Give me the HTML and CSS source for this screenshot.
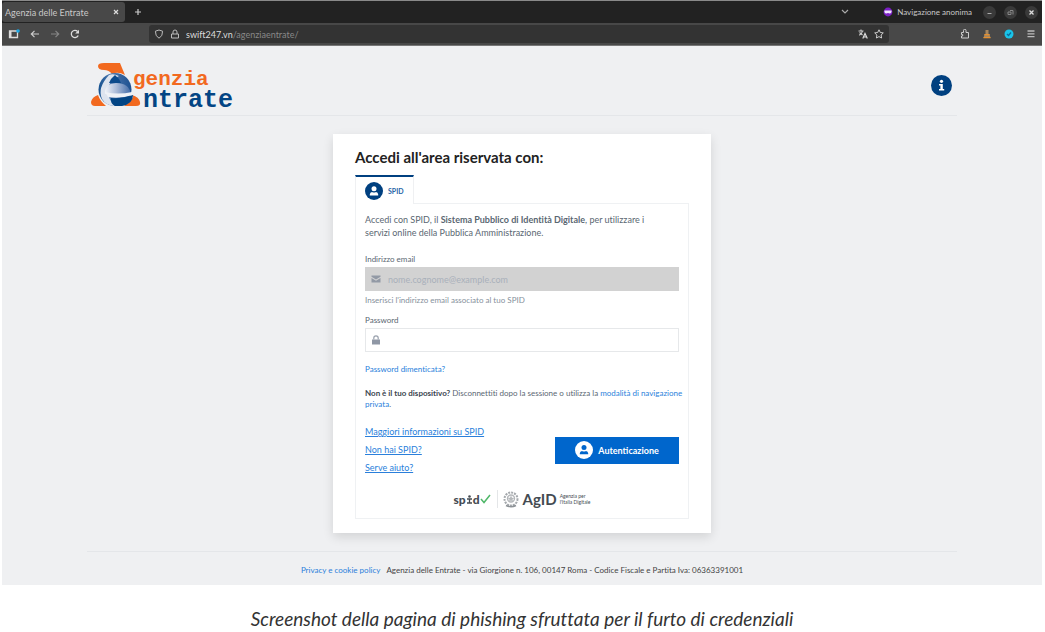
FILE: index.html
```
<!DOCTYPE html>
<html lang="it">
<head>
  <meta charset="UTF-8" />
  <meta name="viewport" content="width=device-width, initial-scale=1.0"/>
  <title>Screenshot della pagina di phishing</title>
  <link rel="stylesheet" href="styles.css">
</head>
<body>

  <figure class="shot">
    <div class="browser">

      <!-- tab strip -->
      <div class="tabs">
        <div class="tab">
          <span>Agenzia delle Entrate</span>
          <button class="icon-btn" aria-label="Chiudi scheda">
            <svg width="6" height="6" viewBox="0 0 6 6"><path d="M1 1l4 4M5 1L1 5" stroke="#ddd" stroke-width="1.2"/></svg>
          </button>
        </div>
        <button class="icon-btn new-tab" aria-label="Nuova scheda">
          <svg width="8" height="8" viewBox="0 0 8 8"><path d="M4 1v6M1 4h6" stroke="#ccc" stroke-width="1.2"/></svg>
        </button>
        <div class="window-tools">
          <svg class="chevron" width="8" height="6" viewBox="0 0 8 6"><path d="M1 1l3 3 3-3" fill="none" stroke="#aaa" stroke-width="1.2"/></svg>
          <svg width="10" height="10" viewBox="0 0 10 10"><circle cx="5" cy="5" r="4.4" fill="#7b1fc4"/><path d="M1.500 3.500h7q.5 2.800-1.700 2.900L5 5.900l-1.800.5Q1 6.300 1.500 3.500z" fill="#f0e4ff"/></svg>
          <span class="private">Navigazione anonima</span>
          <button class="win-btn" aria-label="Riduci">
            <svg width="13" height="13" viewBox="0 0 13 13"><path d="M4.500 7.500h4" stroke="#aaa"/></svg>
          </button>
          <button class="win-btn" aria-label="Ripristina">
            <svg width="13" height="13" viewBox="0 0 13 13"><path d="M4 6h3v2.500H4zM6 4.500h3v4" fill="none" stroke="#888"/></svg>
          </button>
          <button class="win-btn" aria-label="Chiudi">
            <svg width="13" height="13" viewBox="0 0 13 13"><path d="M4.500 4.500l4 4M8.500 4.500l-4 4" stroke="#ddd" stroke-width="1.300"/></svg>
          </button>
        </div>
      </div>

      <!-- toolbar -->
      <div class="toolbar">
        <div class="nav">
          <svg width="12" height="10" viewBox="0 0 12 10"><path d="M1.500 2h8v6.500h-8z" fill="none" stroke="#ddd" stroke-width="1.300"/><path d="M1 2h2.500v6.500H1z" fill="#ddd"/><circle cx="10" cy="2" r="1.800" fill="#1ba8e6"/></svg>
          <svg width="10" height="10" viewBox="0 0 10 10"><path d="M9 5H1.500M4.500 1.800L1.300 5l3.200 3.200" fill="none" stroke="#ccc" stroke-width="1.200"/></svg>
          <svg width="10" height="10" viewBox="0 0 10 10"><path d="M1 5h7.500M5.500 1.800L8.700 5 5.500 8.200" fill="none" stroke="#858585" stroke-width="1.200"/></svg>
          <svg width="10" height="10" viewBox="0 0 10 10"><path d="M8.200 6.500A3.600 3.600 0 1 1 7.600 2.500" fill="none" stroke="#ddd" stroke-width="1.300"/><path d="M9 .8v3.800H5.200z" fill="#ddd"/></svg>
        </div>
        <div class="urlbar">
          <svg width="10" height="10" viewBox="0 0 10 10"><path d="M5 1l3.600 1.200Q8.800 7.400 5 9.200 1.200 7.400 1.400 2.200z" fill="none" stroke="#bbb"/></svg>
          <svg width="10" height="10" viewBox="0 0 10 10"><path d="M1.500 5h7v4h-7zM3 5V3a2 2 0 0 1 4 0v2" fill="none" stroke="#bbb"/></svg>
          <span class="url"><b>swift247.vn</b>/agenziaentrate/</span>
          <svg width="10" height="10" viewBox="0 0 10 10"><path d="M.5 2h5M3 .5V2M1.200 6.200Q4 5 4.500 2M1.500 3.500l3 2.500" fill="none" stroke="#ccc" stroke-width="1.100"/><path d="M4.800 9.500L7 4.500l2.300 5M5.500 8h3" fill="none" stroke="#ddd" stroke-width="1.200"/></svg>
          <svg width="10" height="10" viewBox="0 0 10 10"><path d="M5 .8l1.300 2.700 3 .4-2.200 2.100.5 3L5 7.600 2.400 9l.5-3L.700 3.900l3-.4z" fill="none" stroke="#ccc"/></svg>
        </div>
        <div class="extensions">
          <svg width="10" height="10" viewBox="0 0 10 10"><path d="M1.500 3.500h2v-2a1 1 0 0 1 2.500 0v2h2.500V9h-7V7h1.200V5.500H1.500z" fill="none" stroke="#ccc"/></svg>
          <svg width="10" height="10" viewBox="0 0 10 10"><path d="M3.500 1h3v4h1l1 4h-7l1-4h1z" fill="#a8875f"/><path d="M2.500 5h5v1.200h-5zM1.500 8h7v1.200h-7z" fill="#e8902c"/></svg>
          <svg width="10" height="10" viewBox="0 0 10 10"><circle cx="5" cy="5" r="4.500" fill="#19c3e8"/><path d="M3 5l1.500 1.500L7 3.500" fill="none" stroke="#0a6d9c" stroke-width="1.300"/></svg>
          <svg width="10" height="10" viewBox="0 0 10 10"><path d="M1.500 2h7M1.500 4.800h7M1.500 7.600h7" stroke="#bbb" stroke-width="1.300"/></svg>
        </div>
      </div>

      <!-- page shown in the browser -->
      <div class="page">
        <header class="header">
          <svg class="logo" width="150" height="52" viewBox="0 0 150 52" role="img" aria-label="Agenzia Entrate">
            <defs>
              <linearGradient id="band" x1="0" x2="1">
                <stop offset="0" stop-color="#f1f4f9"/>
                <stop offset=".45" stop-color="#a9bad8"/>
                <stop offset="1" stop-color="#3f69a6"/>
              </linearGradient>
              <linearGradient id="rim" x1="0" x2="1">
                <stop offset="0" stop-color="#13508f"/>
                <stop offset=".35" stop-color="#4d78ae"/>
                <stop offset="1" stop-color="#1d5090"/>
              </linearGradient>
            </defs>
            <path d="M14 2H30Q32 7 35 14Q28 10 22 13Q19 9 14 9Q8 9 8 5Q8 2 14 2z" fill="#f2691f"/>
            <path d="M8 34Q10 40 16 45H5Q1 45 1 41Q2 36 8 34zM42 34Q49 36 50 41Q51 45 46 45H34Q41 41 43 36z" fill="#f2691f"/>
            <circle cx="25" cy="28.500" r="16.500" fill="url(#rim)"/>
            <path d="M19 14Q23 12 29 15Q19 19 18 29Q18 39 25 45Q16 45 12 38Q7 27 19 14z" fill="#dde4ef"/>
            <path d="M25 14Q29 17 31 22H19Q21 17 25 14z" fill="#0b4a8c"/>
            <path d="M15 33Q14 23 26 22Q39 22 41 33z" fill="url(#band)"/>
            <path d="M15 31Q28 34 42 31L43 34Q30 38 18 36z" fill="#eff2f7"/>
            <path d="M21 37Q31 38 43 34Q43 43 32 45H25Q20 42 21 37z" fill="#034584"/>
            <text class="logo-top" x="43" y="24">genzia</text>
            <text class="logo-bottom" x="53" y="46">ntrate</text>
          </svg>
          <a class="info" href="#" aria-label="Informazioni">
            <svg width="21" height="21" viewBox="0 0 21 21"><circle cx="10.500" cy="10.500" r="10.500" fill="#004080"/><circle cx="10.500" cy="6.300" r="1.600" fill="#fff"/><path d="M8 9h3.800v5h1.400v1.600H8V14h1.400v-3.400H8z" fill="#fff"/></svg>
          </a>
        </header>

        <main class="card">
          <h1>Accedi all'area riservata con:</h1>
          <button class="spid-tab" type="button">
            <svg width="18" height="18" viewBox="0 0 18 18"><circle cx="9" cy="9" r="9" fill="#004080"/><circle cx="9" cy="6.800" r="2.500" fill="#fff"/><path d="M4.800 13.500v-1Q5 10.300 7 10.100q2 1 4 0 2 .2 2.200 2.400v1z" fill="#fff"/></svg>
            SPID
          </button>
          <form class="panel">
            <p class="intro">Accedi con SPID, il <strong>Sistema Pubblico di Identità Digitale</strong>, per utilizzare i<br>servizi online della Pubblica Amministrazione.</p>

            <label for="email">Indirizzo email</label>
            <div class="field disabled">
              <svg width="10" height="10" viewBox="0 0 10 10"><path d="M.5 1.500h9v1.300L5 5.500.5 2.800zM.5 4L5 6.700 9.500 4v4.500h-9z" fill="#9299a5"/></svg>
              <input type="email" id="email" placeholder="nome.cognome@example.com" disabled>
            </div>
            <p class="hint">Inserisci l'indirizzo email associato al tuo SPID</p>

            <label for="password">Password</label>
            <div class="field">
              <svg width="10" height="10" viewBox="0 0 10 10"><path d="M1 4.500h8v5H1z" fill="#8f97a5"/><path d="M2.800 4.500V3a2.200 2.200 0 0 1 4.400 0v1.500" fill="none" stroke="#9aa1ad" stroke-width="1.200"/></svg>
              <input type="password" id="password">
            </div>
            <a class="forgot" href="#">Password dimenticata?</a>

            <p class="device"><strong>Non è il tuo dispositivo?</strong> Disconnettiti dopo la sessione o utilizza la <a href="#">modalità di navigazione<br>privata</a>.</p>

            <div class="actions">
              <div class="links">
                <a href="#">Maggiori informazioni su SPID</a>
                <a href="#">Non hai SPID?</a>
                <a href="#">Serve aiuto?</a>
              </div>
              <button class="auth" type="button">
                <svg width="18" height="18" viewBox="0 0 18 18"><circle cx="9" cy="9" r="9" fill="#fff"/><circle cx="9" cy="6.600" r="2.500" fill="#06c"/><path d="M4.800 13.300v-1Q5 10.100 7 9.900q2 1 4 0 2 .2 2.200 2.400v1z" fill="#06c"/></svg>
                Autenticazione
              </button>
            </div>

            <div class="brands">
              <span class="spid">sp<svg width="7" height="9" viewBox="0 0 7 9"><circle cx="3.500" cy="1.500" r="1.300" fill="#444b52"/><path d="M1 4h5M3.500 3.500V8M1 8h5" stroke="#444b52" stroke-width="1.300"/></svg>d</span>
              <svg class="check" width="11" height="10" viewBox="0 0 11 10"><path d="M1 5l3 3.500L10 1" fill="none" stroke="#4fb768" stroke-width="1.500"/></svg>
              <svg class="emblem" width="16" height="18" viewBox="0 0 16 18"><circle cx="8" cy="9" r="6.500" fill="none" stroke="#a5a9ad" stroke-width="2" stroke-dasharray="2 1"/><circle cx="8" cy="8.500" r="3.500" fill="none" stroke="#b5b8bb" stroke-width="1.400"/><path d="M8 5.500l1 2.200 2.200.2-1.700 1.500.5 2.300L8 10.500l-2 1.200.5-2.300-1.700-1.500L7 7.700z" fill="#b5b8bb"/><path d="M3 15.500q5 2.500 10 0" fill="none" stroke="#8c9196" stroke-width="1.500"/></svg>
              <span class="agid">AgID</span>
              <span class="agid-name">Agenzia per<br>l'Italia Digitale</span>
            </div>
          </form>
        </main>

        <footer class="footer">
          <a href="#">Privacy e cookie policy</a>
          <span>Agenzia delle Entrate - via Giorgione n. 106, 00147 Roma - Codice Fiscale e Partita Iva: 06363391001</span>
        </footer>
      </div>
    </div>

    <figcaption>Screenshot della pagina di phishing sfruttata per il furto di credenziali</figcaption>
  </figure>

</body>
</html>
```
FILE: styles.css
```
* {
  box-sizing: border-box;
}
body {
  margin: 0;
  background: #fff;
  font-family: Lato, sans-serif;
  font-size: 8px;
  font-variant-ligatures: none;
  color: #5a6772;
}
a {
  color: #2a7fdb;
  text-decoration: none;
}
button {
  font-family: inherit;
  cursor: pointer;
}
svg {
  display: block;
  flex: none;
}
h1, p {
  margin: 0;
}
.shot {
  margin: 0;
  padding: 0 3px 0 2px;
}

/* browser bars */
.browser {
  border-top: 1px solid #8a8a8a;
}
.tabs {
  display: flex;
  align-items: center;
  height: 22px;
  background: #222;
  color: #c8c8c8;
}
.tab {
  display: flex;
  align-items: center;
  justify-content: space-between;
  width: 123px;
  height: 20px;
  padding: 0 6px 0 3px;
  background: #484848;
  border-radius: 3px;
  font-size: 9px;
  white-space: nowrap;
}
.icon-btn, .win-btn {
  padding: 0;
  border: 0;
  background: none;
}
.new-tab {
  margin-left: 9px;
}
.window-tools {
  display: flex;
  align-items: center;
  margin-left: auto;
  padding-right: 4px;
}
.chevron {
  margin-right: 34px;
}
.private {
  margin: 0 3px 0 4px;
}
.win-btn {
  margin-left: 8px;
  border-radius: 50%;
  background: #3a3a3a;
}
.toolbar {
  display: flex;
  align-items: center;
  height: 23px;
  background: #484848;
  border-bottom: 1px solid #777;
}
.nav {
  display: flex;
  gap: 10px;
  width: 147px;
  padding-left: 6px;
}
.urlbar {
  display: flex;
  flex: 1;
  align-items: center;
  gap: 6px;
  height: 18px;
  padding: 0 5px;
  background: #333;
  border-radius: 3px;
}
.url {
  flex: 1;
  font-size: 9px;
  color: #888;
}
.url b {
  font-weight: normal;
  color: #ddd;
}
.extensions {
  display: flex;
  gap: 12px;
  padding: 0 6px 0 71px;
}

/* page */
.page {
  padding: 0 85px;
  background: #eff0f2;
}
.header {
  display: flex;
  align-items: center;
  justify-content: space-between;
  height: 70px;
  padding: 10px 5px 0 3px;
  border-bottom: 1px solid #e4e6e9;
}
.logo {
  margin-top: 2px;
}
.logo text {
  font-family: "Liberation Mono", monospace;
  font-weight: bold;
}
.logo .logo-top {
  font-size: 21px;
  fill: #f2691f;
}
.logo .logo-bottom {
  font-size: 25px;
  fill: #034584;
}
.card {
  max-width: 378px;
  margin: 18px auto;
  padding: 14px 22px;
  background: #fff;
  box-shadow: 0 4px 10px rgba(0,0,0,0.12);
}
h1 {
  margin-bottom: 8px;
  font-size: 15px;
  line-height: 19px;
  color: #222;
}
.spid-tab {
  display: flex;
  position: relative;
  align-items: center;
  gap: 5px;
  height: 29px;
  margin-bottom: -1px;
  padding: 0 9px;
  border: 1px solid #eff0f2;
  border-top: 2px solid #004080;
  border-bottom: 0;
  background: #fff;
  font-size: 7px;
  font-weight: bold;
  color: #2765a8;
}
.panel {
  padding: 9px;
  border: 1px solid #eff1f3;
}
.intro {
  margin-bottom: 14px;
  font-size: 9px;
  line-height: 13px;
}
label {
  display: block;
  margin-bottom: 2px;
  line-height: 12px;
}
.field {
  display: flex;
  align-items: center;
  gap: 7px;
  height: 24px;
  padding: 0 5px;
  border: 1px solid #e6e8ea;
}
.field.disabled {
  background: #d2d2d2;
  border-color: #d2d2d2;
}
.field input {
  flex: 1;
  padding: 0;
  border: 0;
  outline: 0;
  background: none;
  font-family: inherit;
  font-size: 9px;
}
.field input::placeholder {
  color: #a9b0ba;
}
.hint {
  margin: 3px 0 8px;
  line-height: 12px;
  color: #85909b;
}
.forgot {
  display: block;
  margin: 11px 0 13px;
  line-height: 12px;
}
.device {
  line-height: 11px;
  white-space: nowrap;
}
.device strong {
  color: #3c4650;
}
.actions {
  display: flex;
  align-items: center;
  justify-content: space-between;
  margin-top: 13px;
}
.links {
  display: flex;
  flex-direction: column;
  align-items: flex-start;
  font-size: 9px;
  line-height: 18px;
}
.links a {
  text-decoration: underline;
}
.auth {
  display: flex;
  align-items: center;
  justify-content: center;
  gap: 5px;
  width: 124px;
  height: 27px;
  border: 0;
  background: #06c;
  font-size: 9px;
  font-weight: bold;
  color: #fff;
}
.brands {
  display: flex;
  align-items: center;
  justify-content: center;
  height: 20px;
  margin-top: 12px;
  color: #444b52;
}
.spid {
  display: flex;
  align-items: center;
  font-size: 12px;
  font-weight: 900;
}
.check {
  margin-right: 6px;
}
.emblem {
  box-sizing: content-box;
  padding-left: 5px;
  border-left: 1px solid #e4e6e8;
}
.agid {
  margin: 0 3px 0 4px;
  font-size: 15px;
  font-weight: bold;
}
.agid-name {
  font-size: 5px;
  line-height: 6px;
}
.footer {
  display: flex;
  justify-content: center;
  gap: 6px;
  padding: 12px 0 9px;
  border-top: 1px solid #e4e6e9;
  line-height: 12px;
  color: #444;
}
figcaption {
  padding-top: 22px;
  font-size: 19px;
  font-style: italic;
  line-height: 24px;
  text-align: center;
  color: #333;
}
```
